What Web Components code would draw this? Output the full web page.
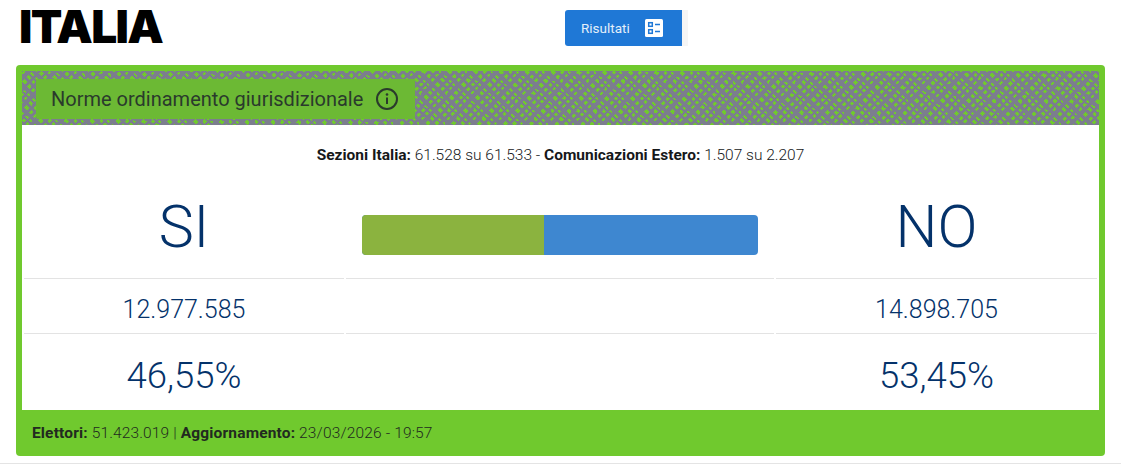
<!DOCTYPE html>
<html lang="it">
<head>
<meta charset="utf-8">
<title>Italia</title>
<style>
  html, body { margin: 0; background: #fff; }
  body { font-family: "Roboto", "Liberation Sans", sans-serif; padding-bottom: 7px; border-bottom: 1px solid #e4e4e4; }
  b { font-weight: 700; }
</style>
</head>
<body>
<page-head>
  <span slot="title">ITALIA</span>
  <result-button>Risultati</result-button>
</page-head>
<result-card>
  <span slot="label">Norme ordinamento giurisdizionale</span>
  <span slot="sections"><b>Sezioni Italia:</b> 61.528 su 61.533 - <b>Comunicazioni Estero:</b> 1.507 su 2.207</span>
  <vote-column slot="yes" name="SI" votes="12.977.585" percent="46,55%"></vote-column>
  <vote-bar slot="bar" yes="182"></vote-bar>
  <vote-column slot="no" name="NO" votes="14.898.705" percent="53,45%"></vote-column>
  <span slot="footer"><b>Elettori:</b> 51.423.019 | <b>Aggiornamento:</b> 23/03/2026 - 19:57</span>
</result-card>

<script>
class PageHead extends HTMLElement {
  constructor() {
    super();
    const shadow = this.attachShadow({ mode: 'open' });
    shadow.innerHTML = `
      <style>
        :host { display: flex; height: 65px; box-sizing: border-box; padding: 10px 0 0 19px; }
        h1 {
          margin: 0; width: 546px; height: 36px;
          font: 900 46px/33px "Inter", "Liberation Sans", sans-serif;
          letter-spacing: -1.7px; color: #000;
        }
      </style>
      <h1><slot name="title"></slot></h1>
      <slot></slot>
    `;
  }
}
customElements.define('page-head', PageHead);

class ResultButton extends HTMLElement {
  constructor() {
    super();
    const shadow = this.attachShadow({ mode: 'open' });
    shadow.innerHTML = `
      <style>
        :host {
          display: flex; align-items: center; gap: 15px; box-sizing: border-box;
          width: 123px; height: 36px; padding-left: 16px;
          background: #1f78d6; border-right: 6px solid #f5f5f5;
          border-radius: 3px 0 0 3px; color: #e4effa; font-size: 13.5px; font-weight: 400;
        }
        svg { display: block; }
      </style>
      <slot></slot>
      <svg width="18" height="18" viewBox="0 0 18 18">
        <rect width="18" height="18" rx="1.5" fill="#fff"/>
        <g fill="none" stroke="#1f78d6" stroke-width="1.5">
          <rect x="3.7" y="3.7" width="3.6" height="3.6"/>
          <rect x="3.7" y="10.7" width="3.6" height="3.6"/>
          <path d="M10 5.5h5M10 12.5h5"/>
        </g>
      </svg>
    `;
  }
}
customElements.define('result-button', ResultButton);

class ResultCard extends HTMLElement {
  constructor() {
    super();
    const shadow = this.attachShadow({ mode: 'open' });
    shadow.innerHTML = `
      <style>
        :host {
          display: block; box-sizing: border-box; width: 1089px; height: 391px; margin-left: 16px;
          background: #70c92e; border-radius: 4px; padding: 6px 6px 0; color: #1c2024;
        }
        .head {
          height: 54px; box-sizing: border-box; padding: 8px 0 0 14px;
          background-color: #70c92e;
          background-image:
            repeating-linear-gradient(43deg, #7c7e8e 0 3px, transparent 3px 6px, #7c7e8e 6px 8px, transparent 8px 10px, #7c7e8e 10px 14px, transparent 14px 17.5px),
            repeating-linear-gradient(-47deg, #7c7e8e 0 4px, transparent 4px 6.5px, #7c7e8e 6.5px 9px, transparent 9px 12px, #7c7e8e 12px 15px, transparent 15px 19px);
        }
        .label {
          display: flex; align-items: center; gap: 12px; box-sizing: border-box;
          width: 379px; height: 40px; padding-left: 15px;
          background: #6cb934; border-radius: 2px; color: #2a3a2c; font-size: 20px;
        }
        .body { background: #fff; height: 285px; box-sizing: border-box; padding-top: 21px; }
        .sections { text-align: center; font-size: 15.5px; line-height: 18px; color: #16181a; font-weight: 300; }
        .cols { display: grid; grid-template-columns: 323px 430px 324px; margin-top: 30px; }
        ::slotted(vote-column[slot="yes"]) { padding: 0 1px 0 2px; }
        ::slotted(vote-column[slot="no"]) { padding: 0 2px 0 1px; }
        .foot {
          height: 46px; box-sizing: border-box; padding: 0 10px; display: flex; align-items: center;
          font-size: 15.5px; letter-spacing: .15px; color: #222a20; font-weight: 300;
        }
      </style>
      <div class="head">
        <div class="label">
          <slot name="label"></slot>
          <svg width="24" height="24" viewBox="0 0 24 24" fill="none" stroke="#2a3a2c">
            <circle cx="12" cy="12" r="10" stroke-width="2"/>
            <path d="M12 10.5v6.5" stroke-width="2"/>
            <circle cx="12" cy="7.5" r="1.3" fill="#2a3a2c" stroke="none"/>
          </svg>
        </div>
      </div>
      <div class="body">
        <div class="sections"><slot name="sections"></slot></div>
        <div class="cols">
          <slot name="yes"></slot>
          <slot name="bar"></slot>
          <slot name="no"></slot>
        </div>
      </div>
      <div class="foot"><span><slot name="footer"></slot></span></div>
    `;
  }
}
customElements.define('result-card', ResultCard);

class VoteColumn extends HTMLElement {
  constructor() {
    super();
    const shadow = this.attachShadow({ mode: 'open' });
    shadow.innerHTML = `
      <style>
        :host { display: block; color: #04326a; text-align: center; font-weight: 350; }
        div { box-sizing: border-box; }
        .name { height: 85px; font-size: 59px; line-height: 66px; border-bottom: 1px solid #e3e3e3; }
        .votes { height: 55px; font-size: 25px; line-height: 61px; border-bottom: 1px solid #e3e3e3; }
        .percent { height: 76px; font-size: 36.5px; line-height: 84px; }
      </style>
      <div class="name"></div>
      <div class="votes"></div>
      <div class="percent"></div>
    `;
    this.updateComponent();
  }

  updateComponent() {
    const shadow = this.shadowRoot;
    shadow.querySelector('.name').textContent = this.getAttribute('name') || '';
    shadow.querySelector('.votes').textContent = this.getAttribute('votes') || '';
    shadow.querySelector('.percent').textContent = this.getAttribute('percent') || '';
  }
}
customElements.define('vote-column', VoteColumn);

class VoteBar extends HTMLElement {
  constructor() {
    super();
    const shadow = this.attachShadow({ mode: 'open' });
    shadow.innerHTML = `
      <style>
        :host { display: block; padding: 0 1px; }
        .top { height: 85px; box-sizing: border-box; padding: 21px 16px 0; border-bottom: 1px solid #e3e3e3; }
        .bar { display: flex; height: 40px; border-radius: 4px; overflow: hidden; background: #3e87d0; }
        .yes { background: #8bb33f; }
        .mid { height: 55px; box-sizing: border-box; border-bottom: 1px solid #e3e3e3; }
      </style>
      <div class="top"><div class="bar"><div class="yes"></div></div></div>
      <div class="mid"></div>
    `;
    shadow.querySelector('.yes').style.width = (this.getAttribute('yes') || 198) + 'px';
  }
}
customElements.define('vote-bar', VoteBar);
</script>
</body>
</html>
